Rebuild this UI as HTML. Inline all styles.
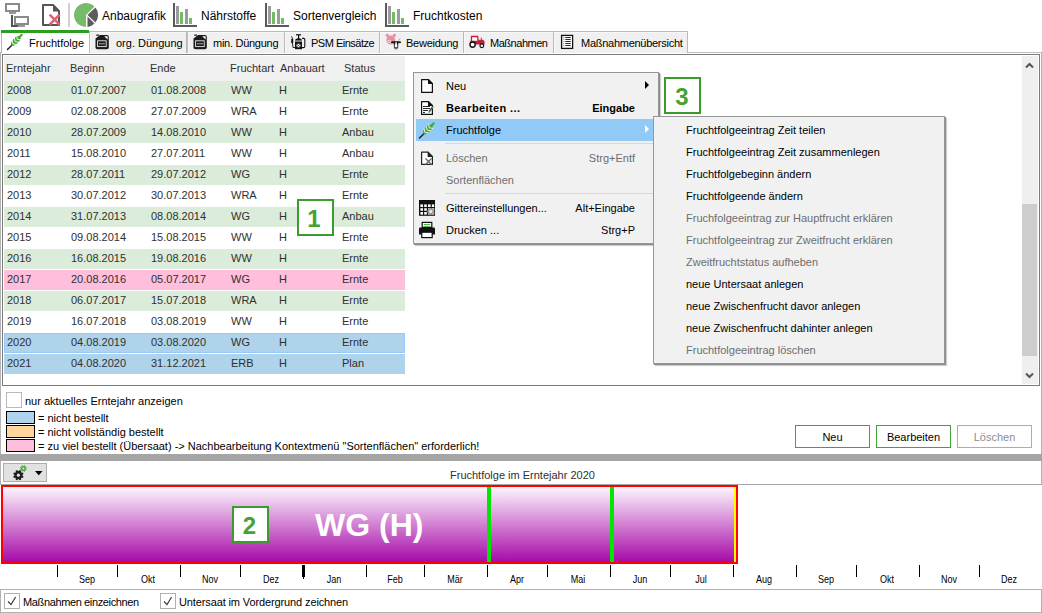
<!DOCTYPE html>
<html><head><meta charset="utf-8">
<style>
*{margin:0;padding:0;box-sizing:border-box}
html,body{width:1042px;height:613px;overflow:hidden;background:#fff;font-family:"Liberation Sans",sans-serif;font-size:11px;color:#000}
.a{position:absolute}
.t{position:absolute;white-space:nowrap;line-height:14px;font-size:11px}
.tb{position:absolute;white-space:nowrap;line-height:16px;font-size:12px}
svg{position:absolute;overflow:visible}
.tab{position:absolute;top:31px;height:22px;background:#f0f0f0;border:1px solid #b9b9b9;border-bottom:none;box-shadow:inset 1px 1px 0 #f8f8f8}
.d{color:#303030}
.row{position:absolute;left:4px;width:401px;height:20px}
.g{background:#dcecda}
.p{background:#ffbedb}
.b{background:#afd3ea}
.mi{position:absolute;white-space:nowrap;line-height:14px;font-size:11px}
.dis{color:#6d6d6d}
.sep{position:absolute;height:1px;background:#d7d7d7}
.lab{position:absolute;border:2px solid #3a9c2a;background:#fff;color:#45a234;font-weight:bold;font-size:24px;text-align:center}
.tick{position:absolute;top:565px;width:1px;height:12px;background:#000}
.mon{position:absolute;top:572px;line-height:14px;font-size:11px;transform:scaleX(0.82);transform-origin:center;width:40px;text-align:center}
.btn{position:absolute;top:425px;height:23px;width:75px;border:1px solid #3fa535;background:#fff;text-align:center;line-height:23px;font-size:11px}
</style></head><body>

<!-- ===== toolbar ===== -->
<svg style="left:0;top:0" width="100" height="30" viewBox="0 0 100 30">
  <!-- network icon -->
  <rect x="6" y="4" width="13" height="7" fill="#fff" stroke="#8a8a8a" stroke-width="2"/>
  <rect x="9" y="12" width="7" height="2" fill="#9a9a9a"/>
  <rect x="11" y="15" width="2" height="12" fill="#555"/>
  <rect x="11" y="25" width="7" height="2" fill="#555"/>
  <rect x="15" y="17" width="13" height="7" fill="#fff" stroke="#8a8a8a" stroke-width="2"/>
  <rect x="18" y="25" width="7" height="2" fill="#9a9a9a"/>
  <!-- doc x icon -->
  <path d="M43 5 H53 L59 11 V25 H43 Z" fill="#fff" stroke="#555" stroke-width="2" stroke-linejoin="round"/>
  <path d="M53 4.5 V11.5 H59.5 Z" fill="#555"/>
  <path d="M49.6 14.6 L59.6 24.6 M59.6 14.6 L49.6 24.6" stroke="#d8667a" stroke-width="2.7"/>
  <!-- separator -->
  <rect x="68" y="3" width="2" height="24" fill="#d0d0d0"/>
  <!-- pie -->
  <path d="M86 15 L94.5 6.5 A12 12 0 1 0 86 27 Z" fill="#76ba6a"/>
  <path d="M87.5 15 L95.5 7.5 A12 12 0 0 1 95.5 22.5 Z" fill="#5c5c5c"/>
  <path d="M87.5 16.5 L94.5 23.5 A12 12 0 0 1 87.5 27 Z" fill="#5c5c5c"/>
</svg>
<div class="tb" style="left:102px;top:8px">Anbaugrafik</div>

<svg style="left:173px;top:0" width="25" height="30" viewBox="0 0 25 30" id="bar1">
  <rect x="0" y="3" width="2" height="24" fill="#5a5a5a"/>
  <rect x="0" y="25" width="24" height="2" fill="#5a5a5a"/>
  <rect x="3" y="6" width="3" height="18" fill="#9b9b9b"/>
  <rect x="7" y="12" width="3" height="12" fill="#74bb66"/>
  <rect x="12" y="9" width="3" height="15" fill="#9b9b9b"/>
  <rect x="16" y="18" width="3" height="6" fill="#74bb66"/>
</svg>
<div class="tb" style="left:201px;top:8px">Nährstoffe</div>
<svg style="left:265px;top:0" width="25" height="30" viewBox="0 0 25 30">
  <rect x="0" y="3" width="2" height="24" fill="#5a5a5a"/>
  <rect x="0" y="25" width="24" height="2" fill="#5a5a5a"/>
  <rect x="3" y="6" width="3" height="18" fill="#9b9b9b"/>
  <rect x="7" y="12" width="3" height="12" fill="#74bb66"/>
  <rect x="12" y="9" width="3" height="15" fill="#9b9b9b"/>
  <rect x="16" y="18" width="3" height="6" fill="#74bb66"/>
</svg>
<div class="tb" style="left:293px;top:8px">Sortenvergleich</div>
<svg style="left:385px;top:0" width="25" height="30" viewBox="0 0 25 30">
  <rect x="0" y="3" width="2" height="24" fill="#5a5a5a"/>
  <rect x="0" y="25" width="24" height="2" fill="#5a5a5a"/>
  <rect x="3" y="6" width="3" height="18" fill="#9b9b9b"/>
  <rect x="7" y="12" width="3" height="12" fill="#74bb66"/>
  <rect x="12" y="9" width="3" height="15" fill="#9b9b9b"/>
  <rect x="16" y="18" width="3" height="6" fill="#74bb66"/>
</svg>
<div class="tb" style="left:413px;top:8px">Fruchtkosten</div>

<!-- ===== tabs ===== -->
<div class="a" style="left:89px;top:52px;width:953px;height:1px;background:#bdbdbd"></div>
<div class="a" style="left:0;top:52px;width:1px;height:433px;background:#b4b4b4"></div>
<div class="a" style="left:1041px;top:52px;width:1px;height:433px;background:#b4b4b4"></div>

<div class="a" style="left:1px;top:30px;width:88px;height:23px;background:#fff;border-left:1px solid #b5b5b5"></div>
<div class="a" style="left:1px;top:30px;width:88px;height:3px;background:#2e9e22"></div>
<div class="t" style="left:29px;top:36px">Fruchtfolge</div>

<div class="tab" style="left:89px;width:98px"></div>
<div class="t" style="left:116px;top:36px">org. Düngung</div>
<div class="tab" style="left:187px;width:98px;border-left:1px solid #bdbdbd"></div>
<div class="t" style="left:213px;top:36px;letter-spacing:-0.27px">min. Düngung</div>
<div class="tab" style="left:285px;width:95px;border-left:none"></div>
<div class="t" style="left:311px;top:36px;letter-spacing:-0.5px">PSM Einsätze</div>
<div class="tab" style="left:380px;width:84px;border-left:none"></div>
<div class="t" style="left:406px;top:36px;letter-spacing:-0.25px">Beweidung</div>
<div class="tab" style="left:464px;width:90px;border-left:none"></div>
<div class="t" style="left:490px;top:36px;letter-spacing:-0.47px">Maßnahmen</div>
<div class="tab" style="left:554px;width:134px;border-left:none"></div>
<div class="t" style="left:581px;top:36px;letter-spacing:-0.27px">Maßnahmenübersicht</div>

<!-- tab icons -->
<svg style="left:0;top:0" width="1042" height="60" viewBox="0 0 1042 60">
  <defs>
    <g id="wheat">
      <path d="M7.5 49.5 L8.7 48.3 M9.3 47.7 L10.3 46.7 M10.8 46.2 L11.8 45.2" stroke="#1a1a1a" stroke-width="1.4" stroke-linecap="round"/>
      <g transform="translate(16.2 40.4) rotate(-45)">
        <ellipse cx="-0.5" cy="0" rx="6.3" ry="3" fill="#46a838"/>
        <ellipse cx="6.6" cy="0" rx="2.4" ry="1.2" fill="#46a838"/>
        <path d="M-4.8 0 L-2.6 -3.2 M-4.8 0 L-2.6 3.2 M-1.6 0 L0.6 -3.2 M-1.6 0 L0.6 3.2 M1.6 0 L3.8 -3.2 M1.6 0 L3.8 3.2" stroke="#fff" stroke-width="0.8" fill="none"/>
      </g>
    </g>
    <g id="can">
      <path d="M95.5 38.5 L100 35 H107 Q108.8 35 108.8 36.8 V47.5 Q108.8 49.3 107 49.3 H97.3 Q95.5 49.3 95.5 47.5 Z" fill="#1c1c1c"/>
      <rect x="96.2" y="34.6" width="2.8" height="1.2" rx="0.5" fill="#1c1c1c"/>
      <path d="M104.2 36.2 H107.6 V39.6 Z" fill="#fff"/>
      <rect x="97.6" y="40.8" width="8.6" height="5.8" fill="none" stroke="#e8e8e8" stroke-width="0.9"/>
      <path d="M99.2 43.8 h1.5 M101.3 43.8 h1.4 M103.2 43.8 h1.5" stroke="#ddd" stroke-width="1"/>
    </g>
  </defs>
  <use href="#wheat"/>
  <use href="#can"/>
  <use href="#can" x="98"/>
  <!-- sprayer -->
  <g>
    <rect x="296" y="34.2" width="5" height="1.2" fill="#111"/>
    <rect x="298" y="35" width="1.2" height="4" fill="#111"/>
    <path d="M295 41 Q295 38.2 298.5 38.2 Q302 38.2 302 41 Z" fill="#111"/>
    <rect x="295" y="40.2" width="7" height="1.6" fill="#8a8a8a"/>
    <rect x="295" y="41.8" width="7" height="7.4" fill="#111"/>
    <circle cx="298.5" cy="45.5" r="2.1" fill="#ddd"/>
    <path d="M297.3 44.3 l2.4 2.4 M299.7 44.3 l-2.4 2.4" stroke="#333" stroke-width="0.7"/>
    <path d="M302 38.4 H303.6 Q304.8 38.4 304.8 39.6 V46.2 Q304.8 47.6 303.4 47.6 H302" fill="none" stroke="#111" stroke-width="1.1"/>
    <rect x="291.2" y="39" width="2" height="4" fill="#111"/>
    <path d="M291.6 36.4 L292.6 39 M292.4 43 L293 47.5 L295 47.5" fill="none" stroke="#111" stroke-width="0.9"/>
  </g>
  <!-- pig + cow -->
  <g>
    <circle cx="387.3" cy="35.3" r="1.6" fill="#ec8ca0"/>
    <circle cx="394.4" cy="35.3" r="1.6" fill="#ec8ca0"/>
    <ellipse cx="390.8" cy="40" rx="4.4" ry="4.6" fill="#ec8ca0"/>
    <ellipse cx="389.3" cy="41.5" rx="1.7" ry="1.2" fill="none" stroke="#fff" stroke-width="0.6"/>
    <ellipse cx="392.6" cy="42.2" rx="1.6" ry="0.9" fill="#111"/>
    <ellipse cx="399.5" cy="42.2" rx="1.6" ry="0.9" fill="#111"/>
    <path d="M398.6 40.6 L400.2 38.4" stroke="#999" stroke-width="0.9"/>
    <path d="M394 41.6 H398.1 L397.6 48 Q396 49.4 394.5 48 Z" fill="#fff" stroke="#111" stroke-width="0.8"/>
    <path d="M394 41.6 H395.6 L395.2 44.5 L394.3 45 Z M398.1 41.6 H396.6 L397 44.5 L397.9 45 Z" fill="#111"/>
    <ellipse cx="396" cy="48.2" rx="1.3" ry="0.9" fill="#aaa" stroke="#222" stroke-width="0.6"/>
  </g>
  <!-- tractor -->
  <g>
    <path d="M471.5 41.5 V36.5 H477.6 L478.2 41.5" fill="#fff" stroke="#c41e3a" stroke-width="1.3"/>
    <path d="M470.2 40.8 H478.4 L478.6 39.8 H483.2 L484.6 41.4 V44.4 H470.2 Z" fill="#c41e3a"/>
    <rect x="480.8" y="37.6" width="0.9" height="2.4" fill="#c41e3a"/>
    <circle cx="472.6" cy="44.6" r="2.65" fill="#fff" stroke="#111" stroke-width="1.4"/>
    <circle cx="481.8" cy="45.8" r="1.85" fill="#fff" stroke="#111" stroke-width="1.2"/>
  </g>
  <!-- list -->
  <g>
    <rect x="561.6" y="35.4" width="11" height="13" fill="#fff" stroke="#111" stroke-width="1.3"/>
    <g fill="#3fb34a">
      <circle cx="563.8" cy="37.6" r="0.6"/><circle cx="563.8" cy="39.6" r="0.6"/><circle cx="563.8" cy="41.6" r="0.6"/><circle cx="563.8" cy="43.6" r="0.6"/><circle cx="563.8" cy="45.6" r="0.6"/>
    </g>
    <path d="M565.3 37.5 h5.4 M565.3 39.5 h5.4 M565.3 41.5 h5.4 M565.3 43.5 h5.4 M565.3 45.5 h5.4" stroke="#111" stroke-width="0.9"/>
  </g>
</svg>

<!-- ===== grid panel ===== -->
<div class="a" style="left:2px;top:54px;width:1038px;height:332px;border:1px solid #7a7a7a"></div>
<div class="a" style="left:4px;top:56px;width:401px;height:25px;background:#f0f0f0"></div>
<div class="t d" style="left:6px;top:61px">Erntejahr</div>
<div class="t d" style="left:70px;top:61px">Beginn</div>
<div class="t d" style="left:150px;top:61px">Ende</div>
<div class="t d" style="left:230px;top:61px">Fruchtart</div>
<div class="t d" style="left:280px;top:61px">Anbauart</div>
<div class="t d" style="left:344px;top:61px">Status</div>

<div class="row g" style="top:81px"></div>
<div class="t d" style="left:7px;top:83px">2008</div>
<div class="t d" style="left:71px;top:83px">01.07.2007</div>
<div class="t d" style="left:151px;top:83px">01.08.2008</div>
<div class="t d" style="left:231px;top:83px">WW</div>
<div class="t d" style="left:279px;top:83px">H</div>
<div class="t d" style="left:342px;top:83px">Ernte</div>
<div class="t d" style="left:7px;top:104px">2009</div>
<div class="t d" style="left:71px;top:104px">02.08.2008</div>
<div class="t d" style="left:151px;top:104px">27.07.2009</div>
<div class="t d" style="left:231px;top:104px">WRA</div>
<div class="t d" style="left:279px;top:104px">H</div>
<div class="t d" style="left:342px;top:104px">Ernte</div>
<div class="row g" style="top:123px"></div>
<div class="t d" style="left:7px;top:125px">2010</div>
<div class="t d" style="left:71px;top:125px">28.07.2009</div>
<div class="t d" style="left:151px;top:125px">14.08.2010</div>
<div class="t d" style="left:231px;top:125px">WW</div>
<div class="t d" style="left:279px;top:125px">H</div>
<div class="t d" style="left:342px;top:125px">Anbau</div>
<div class="t d" style="left:7px;top:146px">2011</div>
<div class="t d" style="left:71px;top:146px">15.08.2010</div>
<div class="t d" style="left:151px;top:146px">27.07.2011</div>
<div class="t d" style="left:231px;top:146px">WW</div>
<div class="t d" style="left:279px;top:146px">H</div>
<div class="t d" style="left:342px;top:146px">Anbau</div>
<div class="row g" style="top:165px"></div>
<div class="t d" style="left:7px;top:167px">2012</div>
<div class="t d" style="left:71px;top:167px">28.07.2011</div>
<div class="t d" style="left:151px;top:167px">29.07.2012</div>
<div class="t d" style="left:231px;top:167px">WG</div>
<div class="t d" style="left:279px;top:167px">H</div>
<div class="t d" style="left:342px;top:167px">Ernte</div>
<div class="t d" style="left:7px;top:188px">2013</div>
<div class="t d" style="left:71px;top:188px">30.07.2012</div>
<div class="t d" style="left:151px;top:188px">30.07.2013</div>
<div class="t d" style="left:231px;top:188px">WRA</div>
<div class="t d" style="left:279px;top:188px">H</div>
<div class="t d" style="left:342px;top:188px">Ernte</div>
<div class="row g" style="top:207px"></div>
<div class="t d" style="left:7px;top:209px">2014</div>
<div class="t d" style="left:71px;top:209px">31.07.2013</div>
<div class="t d" style="left:151px;top:209px">08.08.2014</div>
<div class="t d" style="left:231px;top:209px">WG</div>
<div class="t d" style="left:279px;top:209px">H</div>
<div class="t d" style="left:342px;top:209px">Anbau</div>
<div class="t d" style="left:7px;top:230px">2015</div>
<div class="t d" style="left:71px;top:230px">09.08.2014</div>
<div class="t d" style="left:151px;top:230px">15.08.2015</div>
<div class="t d" style="left:231px;top:230px">WW</div>
<div class="t d" style="left:279px;top:230px">H</div>
<div class="t d" style="left:342px;top:230px">Ernte</div>
<div class="row g" style="top:249px"></div>
<div class="t d" style="left:7px;top:251px">2016</div>
<div class="t d" style="left:71px;top:251px">16.08.2015</div>
<div class="t d" style="left:151px;top:251px">19.08.2016</div>
<div class="t d" style="left:231px;top:251px">WW</div>
<div class="t d" style="left:279px;top:251px">H</div>
<div class="t d" style="left:342px;top:251px">Ernte</div>
<div class="row p" style="top:270px"></div>
<div class="t d" style="left:7px;top:272px">2017</div>
<div class="t d" style="left:71px;top:272px">20.08.2016</div>
<div class="t d" style="left:151px;top:272px">05.07.2017</div>
<div class="t d" style="left:231px;top:272px">WG</div>
<div class="t d" style="left:279px;top:272px">H</div>
<div class="t d" style="left:342px;top:272px">Ernte</div>
<div class="row g" style="top:291px"></div>
<div class="t d" style="left:7px;top:293px">2018</div>
<div class="t d" style="left:71px;top:293px">06.07.2017</div>
<div class="t d" style="left:151px;top:293px">15.07.2018</div>
<div class="t d" style="left:231px;top:293px">WRA</div>
<div class="t d" style="left:279px;top:293px">H</div>
<div class="t d" style="left:342px;top:293px">Ernte</div>
<div class="t d" style="left:7px;top:314px">2019</div>
<div class="t d" style="left:71px;top:314px">16.07.2018</div>
<div class="t d" style="left:151px;top:314px">03.08.2019</div>
<div class="t d" style="left:231px;top:314px">WW</div>
<div class="t d" style="left:279px;top:314px">H</div>
<div class="t d" style="left:342px;top:314px">Ernte</div>
<div class="row b" style="top:333px;border:1px solid #96c9fa"></div>
<div class="t d" style="left:7px;top:335px">2020</div>
<div class="t d" style="left:71px;top:335px">04.08.2019</div>
<div class="t d" style="left:151px;top:335px">03.08.2020</div>
<div class="t d" style="left:231px;top:335px">WG</div>
<div class="t d" style="left:279px;top:335px">H</div>
<div class="t d" style="left:342px;top:335px">Ernte</div>
<div class="row b" style="top:354px"></div>
<div class="t d" style="left:7px;top:356px">2021</div>
<div class="t d" style="left:71px;top:356px">04.08.2020</div>
<div class="t d" style="left:151px;top:356px">31.12.2021</div>
<div class="t d" style="left:231px;top:356px">ERB</div>
<div class="t d" style="left:279px;top:356px">H</div>
<div class="t d" style="left:342px;top:356px">Plan</div>

<!-- scrollbar -->
<div class="a" style="left:1022px;top:56px;width:16px;height:328px;background:#efefef"></div>
<div class="a" style="left:1022px;top:204px;width:15px;height:152px;background:#cdcdcd"></div>
<svg style="left:1022px;top:56px" width="16" height="16" viewBox="0 0 16 16">
  <path d="M4 11.5 L7.5 8 L11 11.5" fill="none" stroke="#555" stroke-width="2"/>
</svg>
<svg style="left:1022px;top:368px" width="16" height="16" viewBox="0 0 16 16">
  <path d="M4 5.5 L7.5 9 L11 5.5" fill="none" stroke="#555" stroke-width="2"/>
</svg>

<!-- legend -->
<div class="a" style="left:6px;top:392px;width:16px;height:16px;border:1px solid #b9b9b9;background:#fff"></div>
<div class="t" style="left:25px;top:394px">nur aktuelles Erntejahr anzeigen</div>
<div class="a" style="left:6px;top:411px;width:29px;height:13px;border:1px solid #000;background:#b0d4ee"></div>
<div class="t" style="left:38px;top:411px">= nicht bestellt</div>
<div class="a" style="left:6px;top:425px;width:29px;height:13px;border:1px solid #000;background:#ffd49d"></div>
<div class="t" style="left:38px;top:425px">= nicht vollständig bestellt</div>
<div class="a" style="left:6px;top:439px;width:29px;height:13px;border:1px solid #000;background:#ffbedb"></div>
<div class="t" style="left:38px;top:439px">= zu viel bestellt (Übersaat) -&gt; Nachbearbeitung Kontextmenü "Sortenflächen" erforderlich!</div>

<div class="btn" style="left:795px">Neu</div>
<div class="btn" style="left:876px">Bearbeiten</div>
<div class="btn" style="left:957px;border-color:#adadad;color:#8d8d8d">Löschen</div>

<!-- splitter -->
<div class="a" style="left:0;top:454px;width:1042px;height:7px;background:#a5a5a5"></div>

<!-- chart header -->
<div class="a" style="left:3px;top:463px;width:44px;height:19px;background:#e1e1e1;border:1px solid #adadad"></div>
<svg style="left:0;top:455px" width="60" height="30" viewBox="0 455 60 30">
  <path d="M22.48 475.65 L23.55 476.44 L22.92 477.97 L21.60 477.76 L20.96 478.40 L21.17 479.72 L19.64 480.35 L18.85 479.28 L17.95 479.28 L17.16 480.35 L15.63 479.72 L15.84 478.40 L15.20 477.76 L13.88 477.97 L13.25 476.44 L14.32 475.65 L14.32 474.75 L13.25 473.96 L13.88 472.43 L15.20 472.64 L15.84 472.00 L15.63 470.68 L17.16 470.05 L17.95 471.12 L18.85 471.12 L19.64 470.05 L21.17 470.68 L20.96 472.00 L21.60 472.64 L22.92 472.43 L23.55 473.96 L22.48 474.75 Z" fill="#1e1e1e"/>
  <circle cx="18.4" cy="475.2" r="1.6" fill="#e1e1e1"/>
  <path d="M25.98 468.79 L26.71 469.29 L26.30 470.28 L25.43 470.13 L25.03 470.53 L25.18 471.40 L24.19 471.81 L23.69 471.08 L23.11 471.08 L22.61 471.81 L21.62 471.40 L21.77 470.53 L21.37 470.13 L20.50 470.28 L20.09 469.29 L20.82 468.79 L20.82 468.21 L20.09 467.71 L20.50 466.72 L21.37 466.87 L21.77 466.47 L21.62 465.60 L22.61 465.19 L23.11 465.92 L23.69 465.92 L24.19 465.19 L25.18 465.60 L25.03 466.47 L25.43 466.87 L26.30 466.72 L26.71 467.71 L25.98 468.21 Z" fill="#4caf3c"/>
  <circle cx="23.4" cy="468.5" r="1.0" fill="#e1e1e1"/>
  <path d="M35 471 H42.5 L38.75 475.2 Z" fill="#000"/>
</svg>
<div class="t d" style="left:450px;top:468px">Fruchtfolge im Erntejahr 2020</div>
<div class="a" style="left:0;top:484px;width:1042px;height:1px;background:#a8a8a8"></div>

<!-- chart bar -->
<div class="a" style="left:1px;top:485px;width:737px;height:79px;border:2px solid #f00;background:linear-gradient(#fdf6fd,#a60aa8)"></div>
<div class="a" style="left:734px;top:487px;width:2px;height:75px;background:#ff0"></div>
<div class="a" style="left:487px;top:487px;width:4px;height:75px;background:#00e600"></div>
<div class="a" style="left:610px;top:487px;width:4px;height:75px;background:#00e600"></div>
<div class="a" style="left:315px;top:505px;font-weight:bold;font-size:32px;line-height:40px;color:#fff">WG (H)</div>

<div class="tick" style="left:57px"></div>
<div class="mon" style="left:66.5px">Sep</div>
<div class="tick" style="left:117px"></div>
<div class="mon" style="left:128.0px">Okt</div>
<div class="tick" style="left:180px"></div>
<div class="mon" style="left:189.5px">Nov</div>
<div class="tick" style="left:240px"></div>
<div class="mon" style="left:251.0px">Dez</div>
<div class="tick" style="left:302px;width:3px;height:12px"></div><div class="tick" style="left:303px;top:577px;height:2px"></div>
<div class="mon" style="left:314.0px">Jan</div>
<div class="tick" style="left:366px"></div>
<div class="mon" style="left:374.5px">Feb</div>
<div class="tick" style="left:424px"></div>
<div class="mon" style="left:435.0px">Mär</div>
<div class="tick" style="left:487px"></div>
<div class="mon" style="left:496.5px">Apr</div>
<div class="tick" style="left:547px"></div>
<div class="mon" style="left:558.0px">Mai</div>
<div class="tick" style="left:610px"></div>
<div class="mon" style="left:619.5px">Jun</div>
<div class="tick" style="left:670px"></div>
<div class="mon" style="left:681.0px">Jul</div>
<div class="tick" style="left:733px"></div>
<div class="mon" style="left:744.0px">Aug</div>
<div class="tick" style="left:796px"></div>
<div class="mon" style="left:805.5px">Sep</div>
<div class="tick" style="left:856px"></div>
<div class="mon" style="left:867.0px">Okt</div>
<div class="tick" style="left:919px"></div>
<div class="mon" style="left:928.5px">Nov</div>
<div class="tick" style="left:979px"></div>
<div class="mon" style="left:988.5px">Dez</div>

<!-- bottom bar -->
<div class="a" style="left:0;top:589px;width:1042px;height:24px;border:1px solid #b0b0b0"></div>
<div class="a" style="left:4px;top:593px;width:16px;height:16px;border:1px solid #b0b0b0;background:#fff"></div>
<div class="t" style="left:23px;top:595px;letter-spacing:-0.37px">Maßnahmen einzeichnen</div>
<div class="a" style="left:160px;top:593px;width:16px;height:16px;border:1px solid #b0b0b0;background:#fff"></div>
<div class="t" style="left:179px;top:595px;letter-spacing:-0.12px">Untersaat im Vordergrund zeichnen</div>

<svg style="left:0;top:590px" width="200" height="22" viewBox="0 590 200 22">
  <path d="M8 601.5 L11 604.6 L15.6 597" fill="none" stroke="#333" stroke-width="1.1"/>
  <path d="M164 601.5 L167 604.6 L171.6 597" fill="none" stroke="#333" stroke-width="1.1"/>
</svg>
<!-- labels -->
<div class="lab" style="left:297px;top:199px;width:37px;height:37px;line-height:35px;padding-right:3px">1</div>
<div class="lab" style="left:232px;top:506px;width:37px;height:37px;line-height:36px;padding-right:2px">2</div>
<div class="lab" style="left:664px;top:77px;width:37px;height:37px;line-height:35px;padding-right:1px">3</div>

<!-- ===== context menu ===== -->
<div class="a" style="left:413px;top:72px;width:246px;height:172px;background:#f1f1f1;border:1px solid #979797;box-shadow:1px 1px 0 #8c8c8c,2px 2px 1px rgba(0,0,0,0.18)"></div>
<div class="a" style="left:416px;top:119px;width:240px;height:22px;background:#91c9f7"></div>
<div class="mi" style="left:446px;top:79px">Neu</div>
<div class="mi" style="left:446px;top:101px;font-weight:bold;letter-spacing:0.38px">Bearbeiten ...</div>
<div class="mi" style="left:446px;top:101px;font-weight:bold;width:189px;text-align:right">Eingabe</div>
<div class="mi" style="left:446px;top:123px">Fruchtfolge</div>
<div class="sep" style="left:445px;top:143px;width:211px"></div>
<div class="mi dis" style="left:446px;top:151px">Löschen</div>
<div class="mi dis" style="left:446px;top:151px;width:189px;text-align:right">Strg+Entf</div>
<div class="mi dis" style="left:446px;top:173px">Sortenflächen</div>
<div class="sep" style="left:445px;top:193px;width:211px"></div>
<div class="mi" style="left:446px;top:201px">Gittereinstellungen...</div>
<div class="mi" style="left:446px;top:201px;width:189px;text-align:right">Alt+Eingabe</div>
<div class="mi" style="left:446px;top:223px">Drucken ...</div>
<div class="mi" style="left:446px;top:223px;width:189px;text-align:right">Strg+P</div>
<svg style="left:0;top:0" width="1042" height="260" viewBox="0 0 1042 260">
  <!-- Neu doc -->
  <path d="M421.6 79.6 H428.6 L432.4 83.4 V92.4 H421.6 Z" fill="#fff" stroke="#111" stroke-width="1.2" stroke-linejoin="round"/>
  <path d="M428 79 V84 H433 Z" fill="#111"/>
  <!-- Bearbeiten doc -->
  <path d="M421.6 101.6 H428.6 L432.4 105.4 V114.4 H421.6 Z" fill="#fff" stroke="#111" stroke-width="1.2" stroke-linejoin="round"/>
  <path d="M428 101 V106 H433 Z" fill="#111"/>
  <path d="M423 106.5 h7 M423 108.5 h7 M423 110.5 h5 M423 112.5 h2" stroke="#111" stroke-width="0.9"/>
  <path d="M433.4 106.4 L428.6 112.6" stroke="#3fae3f" stroke-width="1.4"/>
  <path d="M432.2 107.6 L429.4 111.2" stroke="#555" stroke-width="1.6"/>
  <!-- wheat -->
  <use href="#wheat" x="412" y="88.5"/>
  <!-- Löschen doc -->
  <path d="M421.6 152.1 H428.1 L432.4 156.4 V164.4 H421.6 Z" fill="#fff" stroke="#222" stroke-width="1.2" stroke-linejoin="round"/>
  <path d="M427.6 151.6 V157 H433 Z" fill="#222"/>
  <path d="M425.5 158.5 L431.5 164.5 M431.5 158.5 L425.5 164.5" stroke="#666" stroke-width="1.3"/>
  <!-- Gitter -->
  <rect x="419" y="200" width="16" height="15.8" fill="#111"/>
  <g fill="#fff">
    <rect x="420.4" y="204.4" width="2.6" height="2.6"/><rect x="424.2" y="204.4" width="2.6" height="2.6"/><rect x="428" y="204.4" width="2.6" height="2.6"/><rect x="431.8" y="204.4" width="2.4" height="2.6"/>
    <rect x="420.4" y="208.2" width="2.6" height="2.6"/><rect x="424.2" y="208.2" width="2.6" height="2.6"/><rect x="428" y="208.2" width="2.6" height="2.6"/><rect x="431.8" y="208.2" width="2.4" height="2.6"/>
    <rect x="420.4" y="212" width="2.6" height="2.6"/><rect x="424.2" y="212" width="2.6" height="2.6"/><rect x="428" y="212" width="2.6" height="2.6"/><rect x="431.8" y="212" width="2.4" height="2.6"/>
  </g>
  <circle cx="430.8" cy="211.4" r="3.4" fill="#9a9a9a"/>
  <circle cx="430.8" cy="211.4" r="1.7" fill="#e6e6e6"/>
  <!-- Drucken -->
  <rect x="422.2" y="222.4" width="9.6" height="5" fill="#fff" stroke="#111" stroke-width="1.2"/>
  <path d="M423.8 224.5 h6.4 M423.8 226.4 h6.4" stroke="#3fae3f" stroke-width="0.9"/>
  <path d="M419 228.4 Q419 227.4 420 227.4 H434 Q435 227.4 435 228.4 V234.6 H419 Z" fill="#111"/>
  <rect x="421.8" y="232.2" width="10.4" height="5.4" fill="#fff" stroke="#111" stroke-width="1.2"/>
</svg>
<svg style="left:640px;top:75px" width="14" height="66" viewBox="0 0 14 66">
  <path d="M5 6 L9 10 L5 14 Z" fill="#000"/>
  <path d="M5 50 L9 54 L5 58 Z" fill="#fff"/>
</svg>

<!-- submenu -->
<div class="a" style="left:653px;top:116px;width:292px;height:248px;background:#f1f1f1;border:1px solid #979797;box-shadow:1px 1px 0 #8c8c8c,2px 2px 1px rgba(0,0,0,0.18)"></div>
<div class="mi" style="left:686px;top:123px">Fruchtfolgeeintrag Zeit teilen</div>
<div class="mi" style="left:686px;top:145px">Fruchtfolgeeintrag Zeit zusammenlegen</div>
<div class="mi" style="left:686px;top:167px">Fruchtfolgebeginn ändern</div>
<div class="mi" style="left:686px;top:189px">Fruchtfolgeende ändern</div>
<div class="mi dis" style="left:686px;top:211px">Fruchfolgeeintrag zur Hauptfrucht erklären</div>
<div class="mi dis" style="left:686px;top:233px">Fruchtfolgeeintrag zur Zweitfrucht erklären</div>
<div class="mi dis" style="left:686px;top:255px">Zweitfruchtstatus aufheben</div>
<div class="mi" style="left:686px;top:277px">neue Untersaat anlegen</div>
<div class="mi" style="left:686px;top:299px">neue Zwischenfrucht davor anlegen</div>
<div class="mi" style="left:686px;top:321px">neue Zwischenfrucht dahinter anlegen</div>
<div class="mi dis" style="left:686px;top:343px">Fruchtfolgeeintrag löschen</div>

</body></html>
